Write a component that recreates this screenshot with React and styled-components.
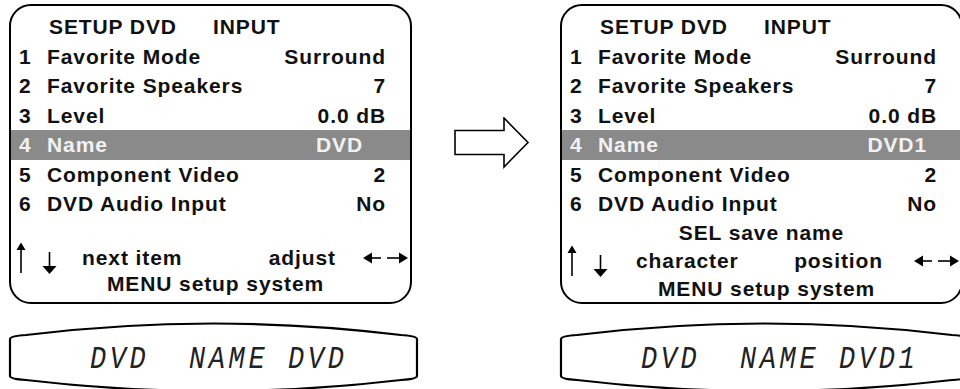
import React from 'react';
import styled, { createGlobalStyle } from 'styled-components';

const GlobalStyle = createGlobalStyle`
  html, body {
    margin: 0;
    padding: 0;
    background: #ffffff;
    overflow: hidden;
  }
  body {
    font-family: "Liberation Sans", Arial, sans-serif;
  }
`;

const Page = styled.div`
  display: flex;
  align-items: flex-start;
  width: 960px;
  height: 389px;
  padding: 4px 0 0 8px;
  box-sizing: border-box;
  overflow: hidden;
`;

const Column = styled.div`
  flex: 0 0 411px;
  display: flex;
  flex-direction: column;
`;

const Screen = styled.div`
  display: flex;
  flex-direction: column;
  width: 403px;
  height: 300px;
  margin-left: 1px;
  box-sizing: border-box;
  padding-top: 6px;
  border: 2.8px solid #000000;
  border-radius: 22px;
  overflow: hidden;

  color: #111111;
  font-size: 21px;
  font-weight: bold;
  letter-spacing: 0.9px;
`;

const Title = styled.div`
  display: flex;
  gap: 36px;
  padding-left: 38px;
  line-height: 29.5px;
`;

const Row = styled.div`
  display: flex;
  padding: 0 24px 0 8px;
  line-height: 29.5px;
  background: ${(p) => (p.$active ? '#8a8a8a' : 'transparent')};
  color: ${(p) => (p.$active ? '#f2f2f2' : 'inherit')};
`;

const Num = styled.span`
  width: 28px;
`;

const Label = styled.span`
  flex: 1;
`;

const Value = styled.span`
  padding-right: ${(p) => p.$inset || 0}px;
`;

const Footer = styled.div`
  display: flex;
  flex-direction: column;
  margin-top: auto;
  padding-bottom: ${(p) => p.$bottom}px;
`;

const CenterLine = styled.div`
  line-height: ${(p) => p.$lh}px;
  text-align: center;
  padding-left: ${(p) => p.$shift || 0}px;
`;

const NavLine = styled.div`
  display: flex;
  align-items: center;
  height: ${(p) => p.$lh}px;
  padding: 0 2px 0 5px;
`;

const NavText = styled.span`
  margin-left: ${(p) => p.$lead || 0}px;
`;

const Spacer = styled.span`
  flex: 1;
`;

const SideArrows = styled.svg`
  margin-left: ${(p) => p.$lead}px;
  flex: none;
`;

const ArrowGap = styled.div`
  flex: 0 0 140px;
  display: flex;
  justify-content: center;
  padding: 113px 0 0 6px;
  box-sizing: border-box;
`;

const Display = styled.div`
  position: relative;
  width: 411px;
  height: 70px;
  margin-top: 18px;
`;

const Frame = styled.svg`
  position: absolute;
  inset: 0;
`;

const DisplayText = styled.div`
  position: relative;
  padding: 4px 0 0 82px;
  line-height: 66px;
  font-family: "Liberation Mono", "Courier New", monospace;
  font-style: italic;
  font-size: 27px;
  letter-spacing: 3.6px;
  white-space: pre;
  color: #222222;
  transform: scaleY(1.18);
  transform-origin: left center;
`;

const UpDown = () => (
  <svg width="42" height="34" viewBox="0 0 42 34">
    <line x1="5" y1="5" x2="5" y2="32" stroke="#000" strokeWidth="1.6" />
    <polygon points="0.5,9 5,1.5 9.5,9" fill="#000" />
    <line x1="33.5" y1="11" x2="33.5" y2="27" stroke="#000" strokeWidth="1.6" />
    <polygon points="26.5,25 40.5,25 33.5,33" fill="#000" />
  </svg>
);

const LeftRight = ({ lead }) => (
  <SideArrows $lead={lead} width="45" height="14" viewBox="0 0 45 14">
    <polygon points="0,7 9,1.5 9,12.5" fill="#000" />
    <line x1="9" y1="7" x2="18" y2="7" stroke="#000" strokeWidth="1.6" />
    <line x1="24" y1="7" x2="36" y2="7" stroke="#000" strokeWidth="1.6" />
    <polygon points="36,1.5 45,7 36,12.5" fill="#000" />
  </SideArrows>
);

const BigArrow = () => (
  <svg width="80" height="52" viewBox="0 0 80 52">
    <polygon
      points="3,13.5 52,13.5 52,1 76,25.5 52,50 52,37.5 3,37.5"
      fill="#fff"
      stroke="#000"
      strokeWidth="1.6"
    />
  </svg>
);

const DisplayFrame = () => (
  <Frame width="411" height="70" viewBox="0 0 411 70">
    <path
      d="M2,17 Q2,14 18,13 Q205.5,-10 393,13 Q409,14 409,17 L409,54 Q409,57 393,58 Q205.5,80 18,58 Q2,57 2,54 Z"
      fill="none"
      stroke="#000"
      strokeWidth="2.2"
    />
  </Frame>
);

const MenuRows = ({ name, inset }) => (
  <>
    <Title>
      <span>SETUP DVD</span>
      <span>INPUT</span>
    </Title>
    <Row>
      <Num>1</Num>
      <Label>Favorite Mode</Label>
      <Value>Surround</Value>
    </Row>
    <Row>
      <Num>2</Num>
      <Label>Favorite Speakers</Label>
      <Value>7</Value>
    </Row>
    <Row>
      <Num>3</Num>
      <Label>Level</Label>
      <Value>0.0 dB</Value>
    </Row>
    <Row $active>
      <Num>4</Num>
      <Label>Name</Label>
      <Value $inset={inset}>{name}</Value>
    </Row>
    <Row>
      <Num>5</Num>
      <Label>Component Video</Label>
      <Value>2</Value>
    </Row>
    <Row>
      <Num>6</Num>
      <Label>DVD Audio Input</Label>
      <Value>No</Value>
    </Row>
  </>
);

const App = () => {
  return (
    <>
      <GlobalStyle />
      <Page>
        <Column>
          <Screen>
            <MenuRows name="DVD" inset={23} />
            <Footer $bottom={5}>
              <NavLine $lh={26}>
                <UpDown />
                <NavText $lead={24}>next item</NavText>
                <Spacer />
                <NavText>adjust</NavText>
                <LeftRight lead={27} />
              </NavLine>
              <CenterLine $lh={26} $shift={10}>MENU setup system</CenterLine>
            </Footer>
          </Screen>
          <Display>
            <DisplayFrame />
            <DisplayText>{'DVD  NAME DVD'}</DisplayText>
          </Display>
        </Column>

        <ArrowGap>
          <BigArrow />
        </ArrowGap>

        <Column>
          <Screen>
            <MenuRows name="DVD1" inset={10} />
            <Footer $bottom={0}>
              <CenterLine $lh={28}>SEL save name</CenterLine>
              <NavLine $lh={28}>
                <UpDown />
                <NavText $lead={27}>character</NavText>
                <Spacer />
                <NavText>position</NavText>
                <LeftRight lead={31} />
              </NavLine>
              <CenterLine $lh={28} $shift={10}>MENU setup system</CenterLine>
            </Footer>
          </Screen>
          <Display>
            <DisplayFrame />
            <DisplayText>{'DVD  NAME DVD1'}</DisplayText>
          </Display>
        </Column>
      </Page>
    </>
  );
};

export default App;
